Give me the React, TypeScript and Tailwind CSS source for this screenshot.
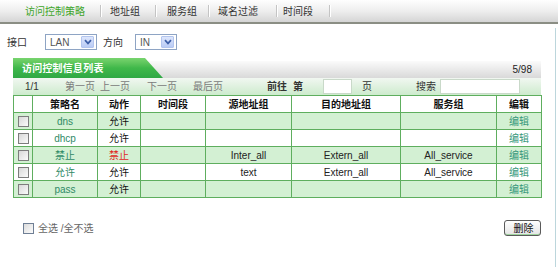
import React from "react";

const Check = () => (
  <span className="inline-block w-[11px] h-[11px] border border-[#7d7d7d] bg-gradient-to-br from-[#d8d8d8] to-[#fbfbfb] align-middle" />
);

const SelectBox = ({ value, w }: { value: string; w: string }) => (
  <div className={`${w} h-[16px] border border-[#8ea4c4] bg-white flex items-center justify-between pl-[4px] pr-[2px]`}>
    <span className="text-[10px] text-[#555]">{value}</span>
    <span className="w-[13px] h-[12px] bg-gradient-to-b from-[#dde6fc] to-[#b9cbf5] border border-[#b3c5ee] rounded-[1px] flex items-center justify-center">
      <svg width="8" height="6" viewBox="0 0 8 6">
        <path d="M1 1.2 L4 4.4 L7 1.2" fill="none" stroke="#3d5fa8" strokeWidth="1.7" />
      </svg>
    </span>
  </div>
);

const Sep = () => <span className="w-px h-[12px] bg-[#c4c4c4] shadow-[1px_0_0_#ffffff]" />;

const rows = [
  { name: "dns", act: "允许", red: false, src: "", dst: "", svc: "", green: true },
  { name: "dhcp", act: "允许", red: false, src: "", dst: "", svc: "", green: false },
  { name: "禁止", act: "禁止", red: true, src: "Inter_all", dst: "Extern_all", svc: "All_service", green: true },
  { name: "允许", act: "允许", red: false, src: "text", dst: "Extern_all", svc: "All_service", green: false },
  { name: "pass", act: "允许", red: false, src: "", dst: "", svc: "", green: true },
];

export default function App() {
  const cell = "border border-[#5eae5e] h-[17px] p-0 text-center align-middle";
  return (
    <div className="w-[558px] h-[267px] overflow-hidden bg-white font-['Liberation_Sans','Noto_Sans_CJK_SC',sans-serif] text-[10px] text-[#222] flex flex-col">
      {/* top tab bar */}
      <div className="h-[24px] shrink-0 border-b-2 border-[#8b8e84] bg-gradient-to-b from-[#fefefe] via-[#eeeeee] to-[#d5d5d5] flex items-center pl-[13px] text-[10px] text-[#333]">
        <div className="w-[88px] flex items-center justify-between">
          <span className="ml-[12px] text-[#3ea52a]">访问控制策略</span>
          <Sep />
        </div>
        <div className="w-[55px] flex items-center justify-between">
          <span className="ml-[9px]">地址组</span>
          <Sep />
        </div>
        <div className="w-[53px] flex items-center justify-between">
          <span className="ml-[11px]">服务组</span>
          <Sep />
        </div>
        <div className="w-[68px] flex items-center justify-between">
          <span className="ml-[9px]">域名过滤</span>
          <Sep />
        </div>
        <div className="w-[53px] flex items-center justify-between">
          <span className="ml-[6px]">时间段</span>
          <Sep />
        </div>
      </div>

      <div className="flex flex-1 min-h-0">
        <div className="flex-1 flex flex-col">
          {/* interface / direction */}
          <div className="mt-[10px] flex items-center pl-[7px] text-[10px] text-[#333]">
            <span className="w-[38px]">接口</span>
            <SelectBox value="LAN" w="w-[52px]" />
            <span className="ml-[6px] w-[32px]">方向</span>
            <SelectBox value="IN" w="w-[42px]" />
          </div>

          <div className="ml-[13px] w-[528px] flex flex-col">
            {/* header */}
            <div className="mt-[8px] h-[20px] flex">
              <div className="relative z-10 w-[150px] h-full bg-gradient-to-b from-[#78d46e] via-[#3fb84a] to-[#2fa844] [clip-path:polygon(0_0,132px_0,150px_100%,0_100%)] flex items-center pl-[9px]">
                <span className="text-white font-bold text-[10px] tracking-[0.2px]">访问控制信息列表</span>
              </div>
              <div className="flex-1 -ml-[20px] mt-[3px] bg-gradient-to-b from-[#fbfbfb] to-[#d9d9d9] flex items-center justify-end pr-[9px]">
                <span className="text-[10px] text-[#222]">5/98</span>
              </div>
            </div>

            {/* pagination */}
            <div className="h-[17px] bg-gradient-to-b from-[#f1f7f1] to-[#cdebcd] flex items-center text-[10px] whitespace-nowrap">
              <span className="ml-[12px] w-[40px] text-[#333]">1/1</span>
              <span className="w-[35px] text-[#7a7a7a]">第一页</span>
              <span className="w-[47px] text-[#7a7a7a]">上一页</span>
              <span className="w-[46px] text-[#7a7a7a]">下一页</span>
              <span className="w-[74px] text-[#7a7a7a]">最后页</span>
              <span className="w-[26px] font-bold text-[#333]">前往</span>
              <span className="w-[30px] font-bold text-[#333]">第</span>
              <span className="w-[29px] h-[15px] bg-white border border-[#c9d9c9]" />
              <span className="ml-[10px] w-[54px] text-[#333]">页</span>
              <span className="w-[24px] text-[#333]">搜索</span>
              <span className="w-[80px] h-[15px] bg-white border border-[#c9d9c9]" />
            </div>

            {/* table */}
            <table className="w-[528px] table-fixed border-collapse">
              <colgroup>
                <col className="w-[19px]" />
                <col className="w-[65px]" />
                <col className="w-[43px]" />
                <col className="w-[65px]" />
                <col className="w-[86px]" />
                <col className="w-[109px]" />
                <col className="w-[96px]" />
                <col className="w-[45px]" />
              </colgroup>
              <thead>
                <tr className="bg-white font-bold text-[#111]">
                  <th className={cell}></th>
                  <th className={cell}>策略名</th>
                  <th className={cell}>动作</th>
                  <th className={cell}>时间段</th>
                  <th className={cell}>源地址组</th>
                  <th className={cell}>目的地址组</th>
                  <th className={cell}>服务组</th>
                  <th className={cell}>编辑</th>
                </tr>
              </thead>
              <tbody>
                {rows.map((r, i) => (
                  <tr key={i} className={r.green ? "bg-[#d3f0d3]" : "bg-white"}>
                    <td className={cell}>
                      <div className="flex items-center justify-center">
                        <Check />
                      </div>
                    </td>
                    <td className={`${cell} text-[#2f8a66]`}>{r.name}</td>
                    <td className={`${cell} ${r.red ? "text-[#e0281e]" : "text-[#111]"}`}>{r.act}</td>
                    <td className={cell}></td>
                    <td className={cell}>{r.src}</td>
                    <td className={cell}>{r.dst}</td>
                    <td className={cell}>{r.svc}</td>
                    <td className={`${cell} text-[#35977a]`}>编辑</td>
                  </tr>
                ))}
              </tbody>
            </table>

            {/* bottom */}
            <div className="mt-[22px] flex items-center justify-between">
              <div className="flex items-center ml-[10px]">
                <span className="inline-block w-[11px] h-[11px] border border-[#6f7f95] bg-gradient-to-br from-[#dcdcdc] to-[#fcfcfc]" />
                <span className="ml-[4px] text-[10px] text-[#666]">全选 /全不选</span>
              </div>
              <button className="w-[37px] h-[16px] rounded-[3px] border border-[#5a5a5a] bg-gradient-to-b from-[#ffffff] to-[#e4e4e4] shadow-[inset_0_-1px_0_#9fd39f] flex items-center justify-center text-[10px] text-[#111] pl-[2px]">
                删除
              </button>
            </div>
          </div>
        </div>
        <div className="w-px mt-[4px] bg-[#bcd6dc] mr-[2px]" />
      </div>
    </div>
  );
}
